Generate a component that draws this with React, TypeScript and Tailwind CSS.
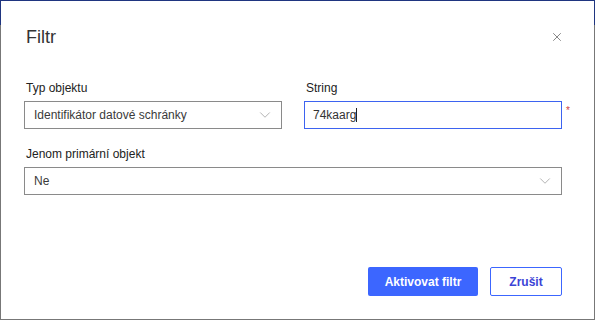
import { X, ChevronDown } from 'lucide-react';

const font = { fontFamily: '"Liberation Sans", Arial, sans-serif' };

function SelectBox({ value, className = '' }: { value: string; className?: string }) {
  return (
    <div
      className={`h-[28px] border border-[#8a8a8a] flex items-center justify-between pl-[9px] pr-[7px] text-[12px] text-[#3a3a3a] ${className}`}
    >
      <span>{value}</span>
      <ChevronDown size={18} strokeWidth={1} className="text-[#9a9a9a]" />
    </div>
  );
}

export default function App() {
  return (
    <div className="w-[595px] h-[320px] bg-[#777777] relative overflow-hidden" style={font}>
      <div className="h-[25px] bg-[#1f3580]" />
      <div className="absolute inset-x-px top-px bottom-px bg-white flex flex-col pl-[23px] pr-[32px]">
        {/* Header */}
        <div className="flex items-center justify-between pt-[25px] pl-[2px]">
          <h1 className="text-[18px] text-[#333] leading-[22px]">Filtr</h1>
          <button className="mr-[-2px] text-[#777]">
            <X size={14} strokeWidth={1.5} />
          </button>
        </div>

        {/* Fields */}
        <div className="grid grid-cols-2 gap-x-[22px] mt-[32px]">
          <div className="flex flex-col">
            <label className="text-[12px] font-medium text-[#222] leading-[16px] pl-[2px]">Typ objektu</label>
            <SelectBox value="Identifikátor datové schránky" className="mt-[5px]" />
          </div>
          <div className="flex flex-col">
            <label className="text-[12px] font-medium text-[#222] leading-[16px] pl-[2px]">String</label>
            <div className="relative mt-[5px]">
              <div className="h-[28px] border border-[#3d63f0] flex items-center pl-[8px] text-[12px] text-[#333]">
                74kaarg<span className="w-px h-[14px] bg-[#222]" />
              </div>
              <span className="absolute right-[-8px] top-[2px] text-[#d04040] text-[10px]">*</span>
            </div>
          </div>
        </div>

        <label className="mt-[17px] text-[12px] font-medium text-[#222] leading-[16px] pl-[2px]">
          Jenom primární objekt
        </label>
        <SelectBox value="Ne" className="mt-[5px]" />

        {/* Footer */}
        <div className="flex justify-end gap-[12px] mt-auto mb-[23px]">
          <button className="h-[29px] w-[110px] bg-[#3c66ff] text-white text-[12px] font-bold rounded-[2px]">
            Aktivovat filtr
          </button>
          <button className="h-[29px] w-[72px] border border-[#3c66ff] text-[#3b43d6] text-[12px] font-bold rounded-[2px]">
            Zrušit
          </button>
        </div>
      </div>
    </div>
  );
}
